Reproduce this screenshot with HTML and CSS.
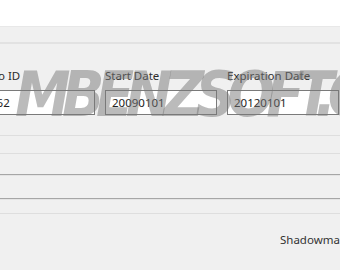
FILE: index.html
```html
<!DOCTYPE html>
<html lang="en">
<head>
    <meta charset="UTF-8">
    <title>Shadowmark</title>
    <link rel="stylesheet" href="styles.css">
</head>
<body>
    <div class="window">
        <div class="titlebar"></div>
        <div class="toolbar"></div>
        <!-- Key fields -->
        <div class="fields">
            <div class="field">
                <div class="field-label">Info ID</div>
                <div class="field-box">262</div>
            </div>
            <div class="field">
                <div class="field-label">Start Date</div>
                <div class="field-box">20090101</div>
            </div>
            <div class="field">
                <div class="field-label">Expiration Date</div>
                <div class="field-box">20120101</div>
            </div>
        </div>
        <!-- Collapsed group boxes -->
        <div class="groups">
            <div class="sep light first"></div>
            <div class="sep light"></div>
            <div class="sep etched"></div>
            <div class="sep etched"></div>
            <div class="sep light last"></div>
        </div>
        <div class="status">Shadowmark</div>
        <div class="watermark">MBENZSOFT.COM</div>
    </div>
</body>
</html>
```

FILE: styles.css
```css
body {
    margin: 0;
    width: 340px;
    height: 270px;
    overflow: hidden;
    background: #f0f0f0;
    font-family: "Noto Sans", "DejaVu Sans", sans-serif;
    color: #333;
}

.window {
    position: relative;
    height: 270px;
    overflow: hidden;
}

.titlebar {
    height: 26px;
    background: #fff;
    border-bottom: 1px solid #e8e8e8;
}

.toolbar {
    height: 15px;
    border-bottom: 2px solid #e2e2e2;
}

.fields {
    display: flex;
    gap: 10px;
    margin-left: -17px;
    padding-top: 24px;
}

.field {
    width: 112px;
}

.field-label {
    font-size: 11.5px;
    line-height: 16px;
    height: 16px;
    margin-bottom: 6px;
    white-space: nowrap;
    color: #2c2c2c;
}

.field-box {
    height: 23px;
    line-height: 23px;
    border: 1px solid #7a7a7a;
    background: #fff;
    padding-left: 6px;
    font-size: 11.5px;
    color: #222;
}

.groups {
    padding-top: 20px;
}

.sep {
    height: 0;
}

.sep.light {
    border-top: 1px solid #dedede;
    margin-bottom: 17px;
}

.sep.etched {
    border-top: 1px solid #a6a6a6;
    border-bottom: 1px solid #e4e4e4;
    margin-bottom: 22px;
}

.sep.etched + .sep.etched {
    margin-bottom: 13px;
}

.sep.light + .sep.light {
    margin-bottom: 20px;
}

.sep.light.last {
    margin-bottom: 0;
}

.status {
    padding: 18px 0 0 280px;
    font-size: 11.5px;
    line-height: 16px;
    white-space: nowrap;
}

.watermark {
    position: absolute;
    top: 64px;
    left: 15px;
    font-family: "DejaVu Sans Condensed", "DejaVu Sans", sans-serif;
    font-weight: bold;
    font-style: italic;
    font-size: 62px;
    line-height: 62px;
    letter-spacing: -8.5px;
    color: rgba(120, 120, 120, 0.5);
    white-space: nowrap;
    pointer-events: none;
}
```
